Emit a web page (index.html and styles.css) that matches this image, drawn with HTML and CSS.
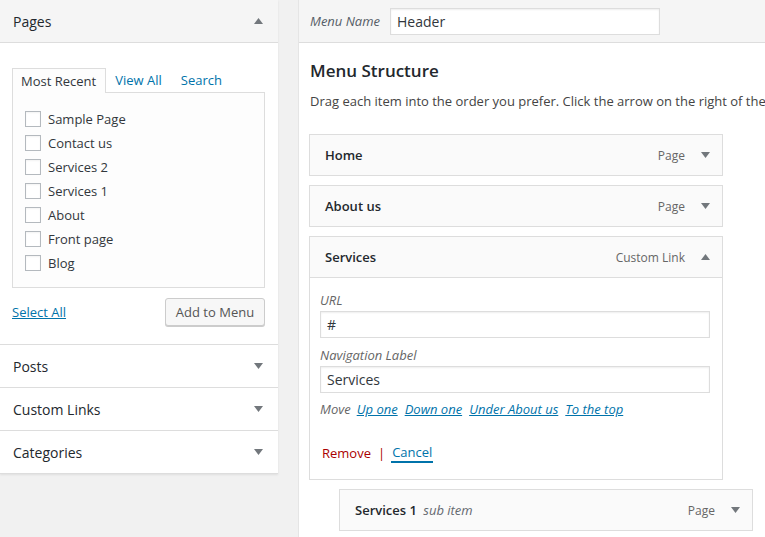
FILE: index.html
```html
<!DOCTYPE html>
<html>
<head>
<meta charset="utf-8">
<link rel="stylesheet" href="styles.css">
</head>
<body>
<div class="page">
  <aside class="sidebar">
    <section class="acc open">
      <div class="acc-head"><span>Pages</span><svg class="tri" width="9" height="6" viewBox="0 0 9 6"><polygon points="0,6 9,6 4.5,0"/></svg></div>
      <div class="acc-body">
        <div class="tabs">
          <span class="tab active">Most Recent</span>
          <a class="tab">View All</a>
          <a class="tab">Search</a>
        </div>
        <div class="tab-panel">
          <label class="check"><span class="box"></span>Sample Page</label>
          <label class="check"><span class="box"></span>Contact us</label>
          <label class="check"><span class="box"></span>Services 2</label>
          <label class="check"><span class="box"></span>Services 1</label>
          <label class="check"><span class="box"></span>About</label>
          <label class="check"><span class="box"></span>Front page</label>
          <label class="check"><span class="box"></span>Blog</label>
        </div>
        <div class="add-row">
          <a class="select-all">Select All</a>
          <button class="btn">Add to Menu</button>
        </div>
      </div>
    </section>
    <section class="acc"><div class="acc-head"><span>Posts</span><svg class="tri" width="9" height="6" viewBox="0 0 9 6"><polygon points="0,0 9,0 4.5,6"/></svg></div></section>
    <section class="acc"><div class="acc-head"><span>Custom Links</span><svg class="tri" width="9" height="6" viewBox="0 0 9 6"><polygon points="0,0 9,0 4.5,6"/></svg></div></section>
    <section class="acc"><div class="acc-head"><span>Categories</span><svg class="tri" width="9" height="6" viewBox="0 0 9 6"><polygon points="0,0 9,0 4.5,6"/></svg></div></section>
  </aside>

  <main class="editor">
    <div class="editor-head">
      <span class="menu-name-label">Menu Name</span>
      <div class="input name-input">Header</div>
    </div>
    <div class="editor-body">
      <h3 class="title">Menu Structure</h3>
      <p class="desc">Drag each item into the order you prefer. Click the arrow on the right of the</p>

      <div class="item">
        <div class="handle"><span class="item-title">Home</span><span class="item-type">Page</span><svg class="tri" width="9" height="6" viewBox="0 0 9 6"><polygon points="0,0 9,0 4.5,6"/></svg></div>
      </div>
      <div class="item">
        <div class="handle"><span class="item-title">About us</span><span class="item-type">Page</span><svg class="tri" width="9" height="6" viewBox="0 0 9 6"><polygon points="0,0 9,0 4.5,6"/></svg></div>
      </div>
      <div class="item">
        <div class="handle"><span class="item-title">Services</span><span class="item-type">Custom Link</span><svg class="tri" width="9" height="6" viewBox="0 0 9 6"><polygon points="0,6 9,6 4.5,0"/></svg></div>
        <div class="settings">
          <div class="field-label">URL</div>
          <div class="input wide">#</div>
          <div class="field-label second">Navigation Label</div>
          <div class="input wide">Services</div>
          <div class="move">
            <span class="move-label">Move</span>
            <a>Up one</a>
            <a>Down one</a>
            <a>Under About us</a>
            <a>To the top</a>
          </div>
          <div class="actions">
            <a class="remove">Remove</a><span class="sep">|</span><a class="cancel">Cancel</a>
          </div>
        </div>
      </div>
      <div class="item sub">
        <div class="handle"><span class="item-title">Services 1 <em class="sub-label">sub item</em></span><span class="item-type">Page</span><svg class="tri" width="9" height="6" viewBox="0 0 9 6"><polygon points="0,0 9,0 4.5,6"/></svg></div>
      </div>
    </div>
  </main>
</div>
</body>
</html>
```

FILE: styles.css
```css
html, body {
  margin: 0;
  padding: 0;
  height: 100%;
  overflow: hidden;
}
body {
  background: #f1f1f1;
  font-family: "Open Sans", "Liberation Sans", sans-serif;
  font-size: 13px;
  color: #32373c;
}
.page {
  display: flex;
  gap: 20px;
  align-items: flex-start;
  height: 100%;
}
.sidebar {
  flex: 0 0 278px;
  background: #fff;
  box-shadow: 0 1px 2px rgba(0,0,0,0.08);
}
.acc-head {
  height: 42px;
  border-bottom: 1px solid #dddddd;
  display: flex;
  align-items: center;
  justify-content: space-between;
  padding: 0 15px 0 13px;
  font-size: 14px;
  color: #23282d;
}
.acc.open .acc-head {
  background: #f5f5f5;
}
.tri {
  fill: #72777c;
  display: block;
}
.acc-body {
  padding: 24px 13px 18px 12px;
  border-bottom: 1px solid #dddddd;
}
.tabs {
  display: flex;
  align-items: flex-end;
  height: 25px;
}
.tab {
  padding: 0 9px 0 8px;
  line-height: 24px;
  color: #0073aa;
}
.tab.active {
  color: #32373c;
  border: 1px solid #dddddd;
  border-bottom: none;
  background: #fdfdfd;
  position: relative;
  top: 1px;
  padding-right: 9px;
}
.tab + .tab {
  padding-left: 9px;
  padding-right: 10px;
}
.tab-panel {
  border: 1px solid #dddddd;
  background: #fdfdfd;
  padding: 14px 12px 12px 12px;
}
.check {
  display: flex;
  align-items: center;
  height: 24px;
  color: #32373c;
}
.box {
  width: 14px;
  height: 14px;
  border: 1px solid #b4b9be;
  background: #fff;
  margin-right: 7px;
  box-shadow: inset 0 1px 2px rgba(0,0,0,0.05);
}
.add-row {
  display: flex;
  justify-content: space-between;
  align-items: center;
  margin-top: 10px;
}
.select-all {
  color: #0073aa;
  text-decoration: underline;
}
.btn {
  font-family: inherit;
  font-size: 13px;
  color: #555;
  background: #f7f7f7;
  border: 1px solid #cccccc;
  border-radius: 3px;
  box-shadow: 0 1px 0 #cccccc;
  height: 28px;
  width: 100px;
  padding: 0;
}

.editor {
  flex: 1 0 auto;
  min-width: 470px;
  height: 100%;
  background: #fff;
  border-left: 1px solid #e5e5e5;
}
.editor-head {
  height: 42px;
  background: #f5f5f5;
  border-bottom: 1px solid #dddddd;
  display: flex;
  align-items: center;
  padding-left: 11px;
}
.menu-name-label {
  font-style: italic;
  color: #555d66;
  width: 80px;
}
.input {
  box-sizing: border-box;
  border: 1px solid #dddddd;
  background: #fff;
  box-shadow: inset 0 1px 2px rgba(0,0,0,0.07);
  height: 27px;
  line-height: 25px;
  padding: 0 6px;
  font-size: 14px;
  color: #32373c;
}
.name-input {
  width: 270px;
}
.editor-body {
  padding: 0 0 0 10px;
}
.title {
  margin: 17px 0 0 1px;
  font-size: 17px;
  font-weight: 600;
  color: #23282d;
  line-height: 22px;
}
.desc {
  margin: 9px 0 0 1px;
  white-space: nowrap;
  line-height: 20px;
  color: #444;
}
.item {
  width: 414px;
  margin-top: 9px;
}
.desc + .item {
  margin-top: 23px;
}
.handle {
  box-sizing: border-box;
  height: 42px;
  border: 1px solid #dddddd;
  background: #fafafa;
  display: flex;
  align-items: center;
  padding: 0 12px 0 15px;
}
.item-title {
  flex: 1;
  font-weight: 600;
  color: #23282d;
}
.item-type {
  font-size: 12px;
  color: #666;
  margin-right: 16px;
}
.item.sub {
  margin-left: 30px;
}
.sub-label {
  font-weight: 400;
  font-style: italic;
  color: #646970;
  margin-left: 3px;
}
.settings {
  border: 1px solid #dddddd;
  border-top: none;
  padding: 12px 10px 16px 10px;
}
.field-label {
  font-style: italic;
  color: #666;
  line-height: 20px;
  margin-bottom: 1px;
}
.field-label.second {
  margin-top: 7px;
}
.input.wide {
  width: 390px;
}
.move {
  margin-top: 6px;
  line-height: 20px;
  font-style: italic;
  display: flex;
  gap: 7px;
}
.move-label {
  color: #666;
  margin-right: -1px;
}
.move a {
  color: #0073aa;
  text-decoration: underline;
}
.actions {
  margin-top: 24px;
  line-height: 20px;
  padding-left: 2px;
  display: flex;
  align-items: center;
}
.remove {
  color: #a00;
}
.sep {
  color: #a00;
  margin: 0 6px 0 7px;
}
.cancel {
  color: #0073aa;
  padding: 0 1px;
  border-bottom: 2px solid #0073aa;
  line-height: 18px;
}
```
